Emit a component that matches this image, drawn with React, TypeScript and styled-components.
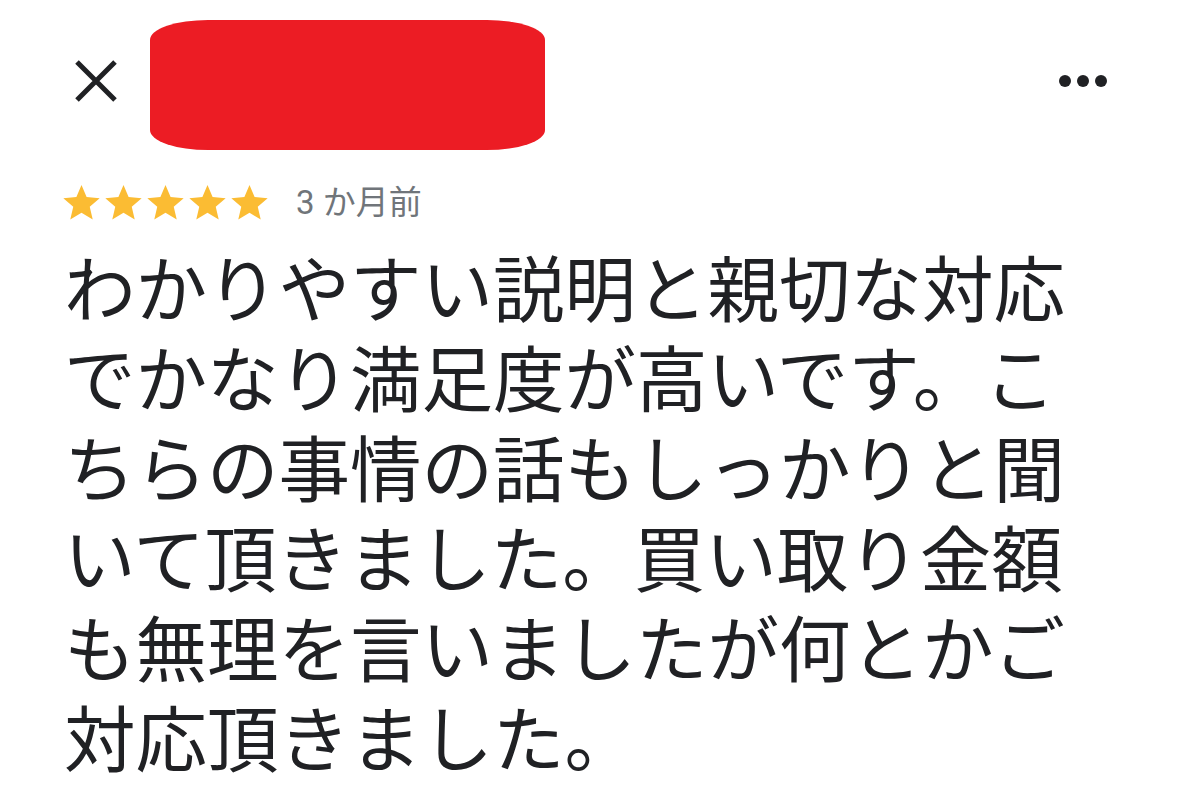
import React from "react";
import styled, { createGlobalStyle } from "styled-components";

const GlobalStyle = createGlobalStyle`
  html, body {
    margin: 0;
    padding: 0;
    background: #ffffff;
  }
  body {
    font-family: "Noto Sans CJK JP", "Noto Sans", sans-serif;
    color: #202124;
  }
`;

const Page = styled.div`
  width: 1179px;
  height: 811px;
  background: #ffffff;
  overflow: hidden;
  display: flex;
  flex-direction: column;
`;

const Header = styled.header`
  display: flex;
  align-items: flex-start;
  padding: 20px 72px 0 75px;
`;

const CloseButton = styled.button`
  margin-top: 40px;
  width: 42px;
  height: 42px;
  padding: 0;
  border: none;
  background: none;
  display: flex;
  align-items: center;
  justify-content: center;
  color: #202124;
`;

const Redaction = styled.div`
  margin-left: 33px;
  width: 395px;
  height: 130px;
  background: #ec1c24;
  border-radius: 58px / 20px;
`;

const Spacer = styled.div`
  flex: 1;
`;

const MoreButton = styled.button`
  margin-top: 55px;
  padding: 0;
  border: none;
  background: none;
  display: flex;
  gap: 6px;
`;

const Dot = styled.span`
  width: 12px;
  height: 12px;
  border-radius: 50%;
  background: #202124;
`;

const MetaRow = styled.div`
  display: flex;
  align-items: center;
  margin-top: 35px;
  padding-left: 63px;
`;

const Stars = styled.div`
  display: flex;
  gap: 5px;
`;

const StarIcon = styled.svg`
  width: 37px;
  height: 35px;
  fill: #fbbc33;
  display: block;
`;

const TimeAgo = styled.span`
  margin-left: 28px;
  font-family: "Roboto", "Noto Sans CJK JP", sans-serif;
  font-size: 33px;
  line-height: 34px;
  color: #70757a;
`;

const ReviewText = styled.p`
  margin: 20px 0 0;
  padding-left: 64px;
  width: 1040px;
  font-family: "Noto Sans CJK JP", sans-serif;
  font-size: 71.5px;
  line-height: 90px;
  color: #202124;
  line-break: strict;
`;

const Star = () => (
  <StarIcon viewBox="2 2 20 19.27">
    <path d="M12 17.27L18.18 21l-1.64-7.03L22 9.24l-7.19-.61L12 2 9.19 8.63 2 9.24l5.46 4.73L5.82 21z" />
  </StarIcon>
);

export default function App() {
  return (
    <>
      <GlobalStyle />
      <Page>
        <Header>
          <CloseButton aria-label="閉じる">
            <svg width="42" height="42" viewBox="0 0 42 42">
              <path d="M2 2L40 40M40 2L2 40" stroke="#202124" strokeWidth="5" />
            </svg>
          </CloseButton>
          <Redaction />
          <Spacer />
          <MoreButton aria-label="その他">
            <Dot />
            <Dot />
            <Dot />
          </MoreButton>
        </Header>
        <MetaRow>
          <Stars>
            {[0, 1, 2, 3, 4].map((i) => (
              <Star key={i} />
            ))}
          </Stars>
          <TimeAgo>3 か月前</TimeAgo>
        </MetaRow>
        <ReviewText>
          わかりやすい説明と親切な対応でかなり満足度が高いです。こちらの事情の話もしっかりと聞いて頂きました。買い取り金額も無理を言いましたが何とかご対応頂きました。
        </ReviewText>
      </Page>
    </>
  );
}
